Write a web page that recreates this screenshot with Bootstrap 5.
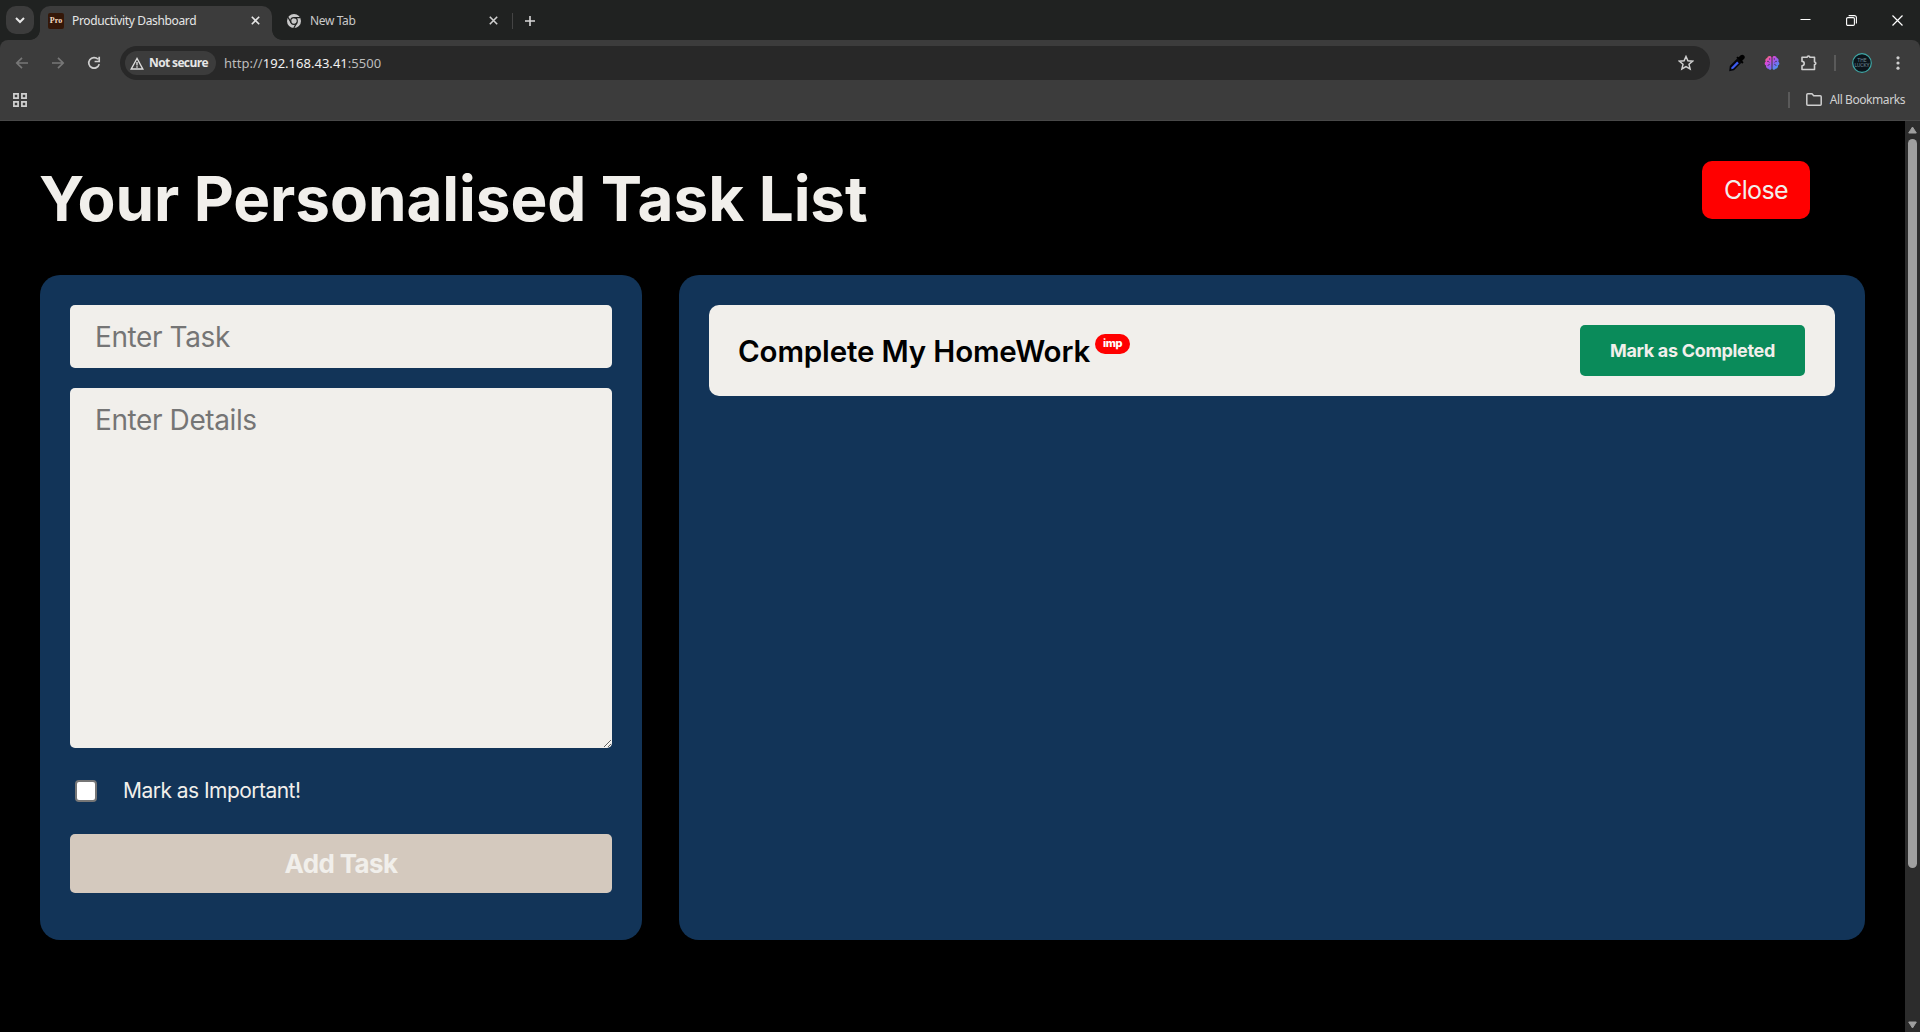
<!DOCTYPE html>
<html lang="en">
<head>
<meta charset="utf-8">
<meta name="viewport" content="width=device-width, initial-scale=1">
<title>Productivity Dashboard</title>
<link href="https://cdn.jsdelivr.net/npm/bootstrap@5.3.0/dist/css/bootstrap.min.css" rel="stylesheet">
<style>
body{background:#000;font-family:Inter,"Liberation Sans",sans-serif;line-height:1.2}
svg{display:block;flex:none}
.window-frame{width:1920px;height:1032px}
/* browser chrome */
.browser-ui{font:12px/16px "Noto Sans","Open Sans",sans-serif;color:#dedede}
.tab-strip{height:40px;background:#202221;padding:6px 0 0 6px}
.tab-search{width:28px;height:28px;border-radius:10px;background:#3c3c3c}
.tab-active{position:relative;width:232px;height:34px;margin-left:6px;padding:1px 12px 6px 8px;background:#3c3c3c;border-radius:10px 10px 0 0;color:#e6e6e6}
.tab-active::before,.tab-active::after{content:"";position:absolute;bottom:0;width:10px;height:10px}
.tab-active::before{left:-10px;background:radial-gradient(circle at 0 0,transparent 9.5px,#3c3c3c 10.2px)}
.tab-active::after{right:-10px;background:radial-gradient(circle at 100% 0,transparent 9.5px,#3c3c3c 10.2px)}
.tab-idle{width:240px;height:34px;padding:1px 14px 6px 15px;color:#c9c9c9}
.tab-title{letter-spacing:-.36px}
.new-tab-title{margin-left:9px}
.favicon{width:16px;height:16px;border-radius:2px;background:#341708;color:#f3ddc4;font:700 8px/16px "Liberation Serif",serif;text-align:center}
.thin-rule{width:2px;height:16px;background:#5a5a5a}
.tab-rule{width:1px;background:#444;margin-right:12px}
.strip-tail{height:29px}
.win-buttons{height:28px;padding-right:17px;gap:35px}
.toolbar-wrap{background:#202221}
.toolbar-row{height:45px;background:#3c3c3c;border-radius:8px 8px 0 0;padding:1px 14px 0 14px}
.gap-before{margin-left:20px}
.gap-before-s{margin-left:18px}
.gap-before-xs{margin-left:16px}
.menu-dots{margin-right:6px}
.address-bar{width:1590px;height:34px;border-radius:17px;background:#282828;padding:0 16px 0 5px;margin-left:18px}
.secure-chip{width:91px;height:24px;border-radius:12px;background:#3c3c3c;padding-left:5px;color:#e6e6e6}
.secure-text{font:700 12px/16px "Open Sans",sans-serif;letter-spacing:-.62px;padding-left:1px}
.url-text{font-size:13px;margin-left:8px;color:#bdbdbd;letter-spacing:.02px}
.url-text b{font-weight:400;color:#f1f1f1}
.bookmark-row{height:36px;background:#3c3c3c;border-bottom:1px solid #484848;padding:0 15px 6px 13px}
.bookmark-text{letter-spacing:-.43px;color:#d0d0d0}
/* page */
.task-page{padding:40px;color:#f1efeb}
.page-head{height:114px}
.page-title{font-size:62px;line-height:75px;font-weight:700;letter-spacing:-.08px;margin:0 0 0 -1px}
.btn-shut{width:108px;height:58px;margin-right:55px;border-radius:10px;background:#f00;color:#f1efeb;font-size:25px;letter-spacing:-.65px;border:0;padding:2px 0 0}
.btn-shut:hover{background:#d00;color:#fff}
.panels{gap:37px}
.panel{background:#123458;border-radius:20px;padding:30px;height:665px}
.panel-form{width:602px}
.field{background:#f1efeb;border:0;border-radius:5px;padding:1px 25px 0;font-size:28px;letter-spacing:-.4px;color:#111}
.field:focus{background:#f1efeb;box-shadow:none}
.field::placeholder{color:#757575;opacity:1}
.field-task{height:63px}
.field-details{height:360px;margin-top:20px;padding-top:14px;line-height:36px;resize:vertical}
.imp-row{height:86px;padding-left:5px;gap:26px;font-size:21px;letter-spacing:-.53px}
.imp-row .check-box{width:22px;height:22px;margin:0;border:2px solid #767676;border-radius:4px;background:#fff}
.btn-add{height:59px;border:0;border-radius:5px;background:#d4c9be;color:#f1efeb;font-size:26px;font-weight:700;letter-spacing:-.6px;padding-top:2px}
.task-card{height:91px;border-radius:10px;background:#f1efeb;padding:0 30px;color:#000}
.task-name{font-size:29.5px;font-weight:600;letter-spacing:-.15px;margin:0 0 0 -1px;line-height:36px}
.imp-tag{width:35px;height:20px;border-radius:10px;background:#f00;color:#fff;font-size:11px;font-weight:800;letter-spacing:-.3px;margin:-13px 0 0 5px}
.btn-done{width:225px;height:51px;border:0;border-radius:5px;background:#0a8b5a;color:#f1efeb;font-size:18px;font-weight:700;letter-spacing:-.32px;padding:0}
.btn-done:hover{background:#087a4e;color:#fff}
.scroll-rail{width:15px;background:#2c2c2c;padding:5px 0 3px}
.scroll-thumb{width:9px;height:729px;border-radius:5px;background:#9f9f9f;margin-top:5px}
</style>
</head>
<body>
<div class="window-frame d-flex flex-column overflow-hidden">
  <header class="browser-ui">
    <div class="tab-strip d-flex">
      <div class="tab-search d-flex align-items-center justify-content-center"><svg width="10" height="7" viewBox="0 0 10 7" fill="none" stroke="#e8e8e8" stroke-width="2"><path d="M1 1l4 4 4-4"/></svg></div>
      <div class="tab-active d-flex align-items-center">
        <span class="favicon">Pro</span><span class="tab-title ms-2 me-auto">Productivity Dashboard</span>
        <svg width="9" height="9" viewBox="0 0 9 9" stroke="#e6e6e6" stroke-width="1.6"><path d="M.8.8l7.4 7.4M8.2.8L.8 8.2"/></svg>
      </div>
      <div class="tab-idle d-flex align-items-center">
        <svg width="14" height="14" viewBox="0 0 14 14"><circle cx="7" cy="7" r="7" fill="#c8c8c8"/><g fill="none" stroke="#202221" stroke-width="1.2"><circle cx="7" cy="7" r="3.3"/><path d="M7 3.7h6.2M4.1 8.6L1 3.3M9.9 8.6L6.8 14"/></g></svg>
        <span class="tab-title new-tab-title me-auto">New Tab</span>
        <svg width="9" height="9" viewBox="0 0 9 9" stroke="#cfcfcf" stroke-width="1.6"><path d="M.8.8l7.4 7.4M8.2.8L.8 8.2"/></svg>
      </div>
      <div class="strip-tail d-flex align-items-center"><span class="thin-rule tab-rule"></span>
        <svg width="10" height="10" viewBox="0 0 10 10" stroke="#d8d8d8" stroke-width="1.6"><path d="M5 0v10M0 5h10"/></svg></div>
      <div class="win-buttons d-flex align-items-center ms-auto">
        <svg width="11" height="11" viewBox="0 0 11 11" stroke="#fff" stroke-width="1"><path d="M.5 4.5h10"/></svg>
        <svg width="11" height="11" viewBox="0 0 11 11" fill="none" stroke="#fff" stroke-width="1.1"><rect x=".6" y="2.6" width="7.8" height="7.8" rx="1.2"/><path d="M2.6.6h5.8a2 2 0 0 1 2 2v5.8"/></svg>
        <svg width="11" height="11" viewBox="0 0 11 11" stroke="#fff" stroke-width="1.2"><path d="M.5.5l10 10M10.5.5l-10 10"/></svg>
      </div>
    </div>
    <div class="toolbar-wrap"><div class="toolbar-row d-flex align-items-center">
      <svg width="16" height="14" viewBox="0 0 16 14" fill="none" stroke="#777" stroke-width="1.7"><path d="M14 7H3M8 1.8L2.8 7 8 12.2"/></svg>
      <svg class="gap-before" width="16" height="14" viewBox="0 0 16 14" fill="none" stroke="#777" stroke-width="1.7"><path d="M2 7h11M8 1.8L13.2 7 8 12.2"/></svg>
      <svg class="gap-before" width="16" height="16" viewBox="0 0 16 16" fill="none" stroke="#cfcfcf" stroke-width="1.7"><path d="M13.2 9.1A5.3 5.3 0 1 1 12 4.3M13.2 1.8v4.7H8.6"/></svg>
      <div class="address-bar d-flex align-items-center">
        <div class="secure-chip d-flex align-items-center">
          <svg width="14" height="13" viewBox="0 0 14 13" fill="none" stroke="#dcdcdc" stroke-width="1.4"><path d="M7 1.5L1.2 12h11.6zM7 5v3.4M7 9.3v1.4"/></svg>
          <span class="secure-text ms-1">Not secure</span>
        </div>
        <span class="url-text">http://<b>192.168.43.41</b>:5500</span>
        <svg class="ms-auto" width="16" height="16" viewBox="0 0 16 16" fill="none" stroke="#cfcfcf" stroke-width="1.5"><path d="M8 1.5l1.9 4.3 4.7.4-3.6 3.1 1.1 4.6L8 11.5l-4.1 2.4L5 9.3 1.4 6.2l4.7-.4z"/></svg>
      </div>
      <svg class="gap-before-s" width="18" height="18" viewBox="0 0 18 18"><path d="M9.2 4.6l4.2 4.2L6 16.3 1.2 17.2l.6-5.2z" fill="#05060c"/><path d="M3.6 13.2l5.600-5.600 1.600 1.600L5.200 14.800l-2 .4z" fill="#3d5bf0"/><path d="M8.3 3.8l5.9 5.9 1.4-1.4-1.4-1.5 2-2a2.5 2.5 0 0 0-3.5-3.5l-2.1 2-.9-.8z" fill="#000"/></svg>
      <svg class="gap-before-s" width="16" height="16" viewBox="0 0 16 16"><defs><linearGradient id="gb" x1="0" y1="0" x2="1" y2="1"><stop offset="0" stop-color="#ff8a38"/><stop offset=".3" stop-color="#dd45d9"/><stop offset=".6" stop-color="#8466f2"/><stop offset="1" stop-color="#27b0ef"/></linearGradient></defs><path d="M7.5 2.4C6.7.3 3.4.9 3.2 3.1 1.3 3.5.9 5.5 1.7 6.5.2 7.5.3 9.9 2 10.6c-.3 2 1 3.2 2.4 3.2.8 1.5 2.9 1.4 3.1-.3zM8.5 2.4c.8-2.1 4.1-1.5 4.3.7 1.9.4 2.3 2.4 1.5 3.4 1.5 1 1.4 3.4-.3 4.1.3 2-1 3.2-2.4 3.2-.8 1.5-2.9 1.4-3.1-.3z" fill="url(#gb)"/><path d="M3 6.5c1.3-.5 2 0 2.3 1M4 11c0-1.2.8-1.7 1.8-1.6M5.7 3.2v1.6M13 6.5c-1.3-.5-2 0-2.3 1M12 11c0-1.2-.8-1.7-1.8-1.6M10.3 3.2v1.6" fill="none" stroke="#4a3560" stroke-width=".9"/></svg>
      <svg class="gap-before" width="18" height="18" viewBox="0 0 18 18" fill="none" stroke="#cfcfcf" stroke-width="1.6" stroke-linejoin="round"><path d="M2 3.3h5.2a1.3 1.3 0 0 1 2.6 0h4.7V8a1.3 1.3 0 0 1 0 2.6v4.9H2v-3.7a2.2 2.2 0 0 0 0-4.4z"/></svg>
      <span class="thin-rule gap-before-xs"></span>
      <svg class="gap-before-xs" width="20" height="20" viewBox="0 0 20 20"><circle cx="10" cy="10" r="9.3" fill="#0b141b" stroke="#3fa7a5" stroke-width="1.2"/><text x="10" y="9" text-anchor="middle" font-size="5" font-family="Roboto, sans-serif" fill="#6f8c99">THE</text><text x="10" y="14" text-anchor="middle" font-size="5" font-family="Roboto, sans-serif" fill="#6f8c99">LUCKY</text></svg>
      <svg class="menu-dots ms-auto" width="4" height="16" viewBox="0 0 4 16" fill="#cfcfcf"><circle cx="2" cy="2.8" r="1.6"/><circle cx="2" cy="8" r="1.6"/><circle cx="2" cy="13.2" r="1.6"/></svg>
    </div></div>
    <div class="bookmark-row d-flex align-items-center">
      <svg width="14" height="14" viewBox="0 0 14 14" fill="none" stroke="#d0d0d0" stroke-width="1.7"><path d="M.9.9h4.2v4.2H.9zM8.9.9h4.2v4.2H8.9zM.9 8.9h4.2v4.2H.9zM8.9 8.9h4.2v4.2H8.9z"/></svg>
      <span class="thin-rule ms-auto"></span>
      <svg class="gap-before-xs" width="16" height="13" viewBox="0 0 16 13" fill="none" stroke="#cfcfcf" stroke-width="1.5" stroke-linejoin="round"><path d="M.8 11.2V1.8q0-1 1-1H6l1.7 1.9h6.5q1 0 1 1v7.5q0 1-1 1H1.800q-1 0-1-1z"/></svg>
      <span class="bookmark-text ms-2">All Bookmarks</span>
    </div>
  </header>

  <div class="d-flex flex-grow-1">
    <main class="task-page flex-grow-1">
      <div class="page-head d-flex justify-content-between align-items-start">
        <h1 class="page-title">Your Personalised Task List</h1>
        <button class="btn btn-shut" type="button">Close</button>
      </div>
      <div class="panels d-flex">
        <form class="panel panel-form flex-shrink-0">
          <input class="form-control field field-task" type="text" placeholder="Enter Task">
          <textarea class="form-control field field-details" placeholder="Enter Details"></textarea>
          <div class="imp-row d-flex align-items-center">
            <input class="form-check-input check-box" type="checkbox" id="important">
            <label for="important">Mark as Important!</label>
          </div>
          <button class="btn-add w-100" type="button">Add Task</button>
        </form>
        <section class="panel flex-grow-1">
          <div class="task-card d-flex align-items-center">
            <h5 class="task-name">Complete My HomeWork</h5>
            <span class="imp-tag d-flex align-items-center justify-content-center">imp</span>
            <button class="btn btn-done ms-auto" type="button">Mark as Completed</button>
          </div>
        </section>
      </div>
    </main>
    <div class="scroll-rail d-flex flex-column align-items-center">
      <svg width="9" height="8" viewBox="0 0 9 8"><path d="M4.5 1L8.3 7H.7z" fill="#9f9f9f" stroke="#9f9f9f" stroke-linejoin="round"/></svg>
      <div class="scroll-thumb"></div>
      <svg class="mt-auto" width="9" height="8" viewBox="0 0 9 8"><path d="M4.5 7L8.3 1H.7z" fill="#9f9f9f" stroke="#9f9f9f" stroke-linejoin="round"/></svg>
    </div>
  </div>
</div>
<script src="https://cdn.jsdelivr.net/npm/bootstrap@5.3.0/dist/js/bootstrap.bundle.min.js"></script>
</body>
</html>
